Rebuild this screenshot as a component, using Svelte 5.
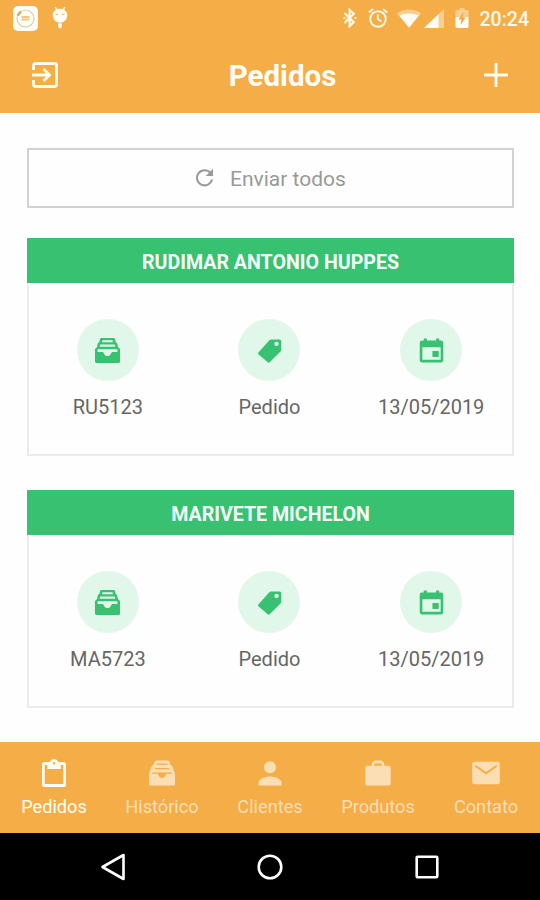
<script lang="ts">
  type Order = { client: string; code: string; kind: string; date: string };

  const orders: Order[] = [
    { client: "RUDIMAR ANTONIO HUPPES", code: "RU5123", kind: "Pedido", date: "13/05/2019" },
    { client: "MARIVETE MICHELON", code: "MA5723", kind: "Pedido", date: "13/05/2019" },
  ];

  const tabs = [
    { id: "orders", label: "Pedidos" },
    { id: "history", label: "Histórico" },
    { id: "clients", label: "Clientes" },
    { id: "products", label: "Produtos" },
    { id: "contact", label: "Contato" },
  ];

  let active = $state("orders");
</script>

{#snippet icon(name: string)}
  <svg class="icon" viewBox="0 0 28 28" fill="currentColor" aria-hidden="true">
    {#if name === "drawer"}
      <path
        fill-rule="evenodd"
        d="M7.5 1h13q1 0 1.200 1l.8 3.500q1 .2 1.500 1l.9 4q1.900.8 2.100 2.500v12.500q0 1.500-1.500 1.500h-23Q1 27 1 25.500V13q.2-1.700 2.100-2.500l.9-4q.5-.8 1.500-1l.8-3.500q.2-1 1.200-1zM8.800 3.300l-.5 2.200h11.400l-.5-2.200zM6.400 7.900l-.5 2.300h16.200l-.5-2.300zM3.700 12.700v2.800h5.500c1 0 1 4.300 4.800 4.300s3.800-4.300 4.800-4.300h5.500v-2.800z"
      />
    {:else if name === "archive"}
      <path
        fill-rule="evenodd"
        d="M8.500 1.500h11q1.500 0 2 1.500l1 3q1.200.2 1.700 1.500l2.500 6q.3.800.3 1.800V25q0 1.500-1.500 1.500h-23Q1 26.500 1 25v-9.700q0-1 .3-1.800l2.500-6Q4.300 6.200 5.500 6l1-3q.5-1.500 2-1.500zM8.500 4.500l-.3 1.200h11.600l-.3-1.200zM7 9l-.4 1.300h14.800L21 9zM4.500 13.500l-.4 1.300h5.400c.8 0 1 4.200 4.500 4.200s3.700-4.200 4.500-4.200h5.400l-.4-1.300z"
      />
    {:else if name === "tag"}
      <path
        fill-rule="evenodd"
        d="M15.500 2.500h9q1.700 0 1.700 1.700v9q0 1-.8 1.800L14.200 26.200q-1 1-2 0L2.500 18q-1-1 0-2L13.800 3.300q.8-.8 1.700-.8zM21.300 4.800a2.300 2.300 0 1 0 0 4.600 2.300 2.300 0 0 0 0-4.600z"
      />
    {:else if name === "calendar"}
      <path
        fill-rule="evenodd"
        d="M6 1.500h3.200v2.200h9.600V1.500H22v2.200h2q2.200 0 2.200 2.200v18.300q0 2.200-2.200 2.200H4q-2.200 0-2.200-2.200V5.900q0-2.200 2.200-2.200h2zM4.500 10.500v13.200h19V10.500z"
      />
      <path d="M15 14.500h6.500v6.200H15z" />
    {:else if name === "orders"}
      <path
        fill-rule="evenodd"
        d="M4.200 3h5.700C10.500 1.300 12 .1 14 .1S17.500 1.300 18.100 3h5.700q2.200 0 2.200 2.200v20.500q0 2.200-2.200 2.200H4.200Q2 27.900 2 25.700V5.200Q2 3 4.200 3zM4.700 6v19h18.600V6h-2.500v4H7.200V6zM14 3a1.200 1.200 0 1 0 0 2.400A1.200 1.200 0 0 0 14 3z"
      />
    {:else if name === "clients"}
      <circle cx="14" cy="8.200" r="6" />
      <path d="M2.500 26.500v-2.700c0-4.300 7.500-6.300 11.500-6.300s11.500 2 11.500 6.300v2.700z" />
    {:else if name === "products"}
      <path
        fill-rule="evenodd"
        d="M10.500 1.500h7l2.700 2.600v2.600H25q1.700 0 1.700 1.700v16.400q0 1.700-1.700 1.700H3q-1.700 0-1.700-1.700V8.400Q1.300 6.700 3 6.700h4.800V4.100zM10.300 4.500v2.200h7.400V4.500z"
      />
    {:else if name === "contact"}
      <path d="M2.700 2.700h22.600q2.500 0 2.500 2.500v17.500q0 2.500-2.500 2.500H2.700q-2.500 0-2.500-2.500V5.200q0-2.500 2.500-2.500z" />
      <path d="M3.200 6.800 14 14.200l10.800-7.400" fill="none" stroke="#f5ad48" stroke-width="2" />
    {/if}
  </svg>
{/snippet}

<div class="screen">
  <div class="status">
    <svg class="app-badge" viewBox="0 0 25 25">
      <rect width="25" height="25" rx="5" fill="#fffdf5" />
      <circle cx="12.500" cy="12.500" r="8.500" fill="none" stroke="#d8cdb5" stroke-width="1.100" />
      <path d="M4.500 9.500 8 5.500" stroke="#c9a94e" stroke-width="2" />
      <path d="M8.500 11h8M8.500 13.500h8" stroke="#ecc98b" stroke-width="1.800" />
    </svg>
    <svg class="droid" viewBox="0 0 16 22">
      <path d="m3 0 2.200 3M13 0l-2.200 3" stroke="#fffdf5" stroke-width="1.300" />
      <path d="M8 1.700c4.300 0 7.300 2.700 7.300 6.600 0 3.700-2.800 6.700-5.600 7.200v4.300q0 1.700-1.700 1.700t-1.700-1.700v-4.300C3.500 15 .7 12 .7 8.300.7 4.400 3.700 1.700 8 1.700z" fill="#fffdf5" />
      <path d="M3.500 7.300h2.700M9.800 7.300h2.700M6 16h4" stroke="#f5c16f" stroke-width="1.200" />
    </svg>
    <div class="system">
      <svg class="bt" viewBox="0 0 14 20" fill="none" stroke="#fff8e8" stroke-width="2.200">
        <path d="m1.500 5 9.300 9.200L6.600 18V2l4.200 3.800L1.500 15" />
        <path d="M.5 10h2M11.500 10h2" />
      </svg>
      <svg class="alarm" viewBox="0 0 20 20" fill="none" stroke="#fff8e8" stroke-width="1.900">
        <circle cx="10" cy="11" r="7.800" />
        <path d="M9.800 6.500V11l3.500 2.600M.8 4.500 5 1M19.200 4.500 15 1" />
      </svg>
      <svg class="wifi" viewBox="0 0 24 19">
        <path d="M0 4.500C6.500-.8 17.500-.8 24 4.500L12 19z" fill="#f9cf91" />
        <path d="M2.300 6.500c5.500-2.700 13.900-2.700 19.400 0L12 18.500z" fill="#fffdf5" />
      </svg>
      <svg class="cell" viewBox="0 0 20 19">
        <path d="M20 0v19H0z" fill="#f9cf91" />
        <path d="M14.500 5.200V19H0z" fill="#fffdf5" />
      </svg>
      <svg class="battery" viewBox="0 0 14 20">
        <path d="M4.500 0h5v2H12q1.500 0 1.500 1.500V9H.5V3.500Q.5 2 2 2h2.500z" fill="#f9cf91" />
        <path d="M.5 9h13v9.500q0 1.500-1.500 1.500H2Q.5 20 .5 18.500z" fill="#fffdf5" />
        <path d="m8.500 4-5 7.500h3L5.700 17l5-7.500h-3z" fill="#eda947" />
      </svg>
      <span class="clock">20:24</span>
    </div>
  </div>

  <header>
    <button aria-label="Sair">
      <svg class="exit" viewBox="0 0 26 26" fill="none" stroke="#fffdf0" stroke-width="2.800">
        <path d="M1.500 8V3.500q0-2 2-2h19q2 0 2 2v19q0 2-2 2h-19q-2 0-2-2V18" />
        <path d="M0 13h17M11.500 7l6 6-6 6" />
      </svg>
    </button>
    <h1>Pedidos</h1>
    <button aria-label="Novo pedido">
      <svg class="plus" viewBox="0 0 24 24" stroke="#fffdf5" stroke-width="2.900">
        <path d="M12 0v24M0 12h24" />
      </svg>
    </button>
  </header>

  <main>
    <button class="send-all">
      <svg class="refresh" viewBox="0 0 20 20">
        <path d="M16.300 5.200A8 8 0 1 0 17.900 12" fill="none" stroke="#999" stroke-width="2.100" />
        <path d="M19 .8v7.700h-7.700z" fill="#999" />
      </svg>
      <span>Enviar todos</span>
    </button>

    {#each orders as order (order.code)}
      <section class="card">
        <h2>{order.client}</h2>
        <div class="facts">
          <div class="fact">
            <div class="bubble">{@render icon("drawer")}</div>
            <span>{order.code}</span>
          </div>
          <div class="fact">
            <div class="bubble">{@render icon("tag")}</div>
            <span>{order.kind}</span>
          </div>
          <div class="fact">
            <div class="bubble">{@render icon("calendar")}</div>
            <span>{order.date}</span>
          </div>
        </div>
      </section>
    {/each}
  </main>

  <nav class="tabs">
    {#each tabs as tab (tab.id)}
      <button class="tab" class:active={active === tab.id} onclick={() => (active = tab.id)}>
        {@render icon(tab.id === "history" ? "archive" : tab.id)}
        <span>{tab.label}</span>
      </button>
    {/each}
  </nav>

  <div class="softkeys">
    <svg viewBox="0 0 28 28"><path d="M24.500 2v24L3.500 14z" /></svg>
    <svg viewBox="0 0 28 28"><circle cx="14" cy="14" r="11.300" /></svg>
    <svg viewBox="0 0 28 28"><rect x="3.700" y="3.700" width="20.600" height="20.600" rx="1" /></svg>
  </div>
</div>

<style>
  :global(body) {
    margin: 0;
  }
  .screen {
    width: 540px;
    height: 900px;
    display: flex;
    flex-direction: column;
    overflow: hidden;
    background: #fefefe;
    font-family: Roboto, "Liberation Sans", sans-serif;
  }
  svg {
    display: block;
    flex: none;
  }
  button {
    font: inherit;
    border: 0;
    padding: 0;
    background: none;
  }
  .status {
    height: 37px;
    box-sizing: border-box;
    padding: 0 11px 0 13px;
    display: flex;
    align-items: center;
    background: #f5ad48;
  }
  .app-badge {
    width: 25px;
    height: 25px;
  }
  .droid {
    width: 16px;
    height: 22px;
    margin-left: 14px;
  }
  .system {
    margin-left: auto;
    display: flex;
    align-items: center;
  }
  .bt {
    width: 14px;
    height: 20px;
  }
  .alarm {
    width: 20px;
    height: 20px;
    margin-left: 11px;
  }
  .wifi {
    width: 24px;
    height: 19px;
    margin-left: 9px;
  }
  .cell {
    width: 20px;
    height: 19px;
    margin-left: 3px;
  }
  .battery {
    width: 14px;
    height: 20px;
    margin-left: 11px;
  }
  .clock {
    margin: 3px 0 0 11px;
    font-size: 19.5px;
    line-height: 24px;
    font-weight: 500;
    color: #fff8e8;
  }
  header {
    height: 76px;
    box-sizing: border-box;
    padding: 0 32px;
    display: grid;
    grid-template-columns: 26px 1fr 24px;
    align-items: center;
    background: #f5ad48;
  }
  h1 {
    margin: 2px 0 0 23px;
    text-align: center;
    font-size: 29.5px;
    line-height: 34px;
    font-weight: 700;
    color: #fffdf5;
  }
  .exit {
    width: 26px;
    height: 26px;
  }
  .plus {
    width: 24px;
    height: 24px;
  }
  main {
    flex: 1;
    padding: 35px 26px 0 27px;
    display: flex;
    flex-direction: column;
  }
  .send-all {
    height: 60px;
    margin-bottom: 30px;
    box-sizing: border-box;
    border: 2px solid #d2d2d2;
    display: flex;
    align-items: center;
    justify-content: center;
    gap: 16px;
    font-size: 21px;
    color: #999;
  }
  .send-all span {
    padding-top: 2px;
  }
  .refresh {
    width: 19px;
    height: 19px;
  }
  .card {
    height: 218px;
    margin-bottom: 34px;
    box-sizing: border-box;
    border: 2px solid #ebebeb;
    border-top: 0;
  }
  h2 {
    margin: 0 -2px;
    height: 45px;
    line-height: 49px;
    text-align: center;
    font-size: 19.6px;
    font-weight: 700;
    color: #f6fff9;
    background: #37c171;
  }
  .facts {
    display: grid;
    grid-template-columns: repeat(3, 1fr);
    padding-top: 36px;
    margin-left: -2px;
  }
  .fact {
    display: flex;
    flex-direction: column;
    align-items: center;
    gap: 13px;
    font-size: 20px;
    line-height: 26px;
    color: #666;
  }
  .bubble {
    width: 62px;
    height: 62px;
    border-radius: 50%;
    display: grid;
    place-items: center;
    background: #e0f7e9;
    color: #37c171;
  }
  .icon {
    width: 28px;
    height: 28px;
  }
  .bubble .icon {
    width: 27px;
    height: 27px;
    padding-top: 1px;
  }
  .tabs {
    height: 92px;
    display: grid;
    grid-template-columns: repeat(5, 1fr);
    background: #f5ad48;
  }
  .tab {
    padding-top: 17px;
    display: flex;
    flex-direction: column;
    align-items: center;
    gap: 8px;
    font-size: 18.2px;
    line-height: 24px;
    color: #fbdeb3;
  }
  .tab.active {
    color: #fffdf0;
  }
  .softkeys {
    height: 67px;
    box-sizing: border-box;
    padding: 0 99px;
    display: flex;
    align-items: center;
    justify-content: space-between;
    background: #000;
  }
  .softkeys svg {
    width: 28px;
    height: 28px;
    fill: none;
    stroke: #fff;
    stroke-width: 2.6;
    stroke-linejoin: round;
  }
</style>
